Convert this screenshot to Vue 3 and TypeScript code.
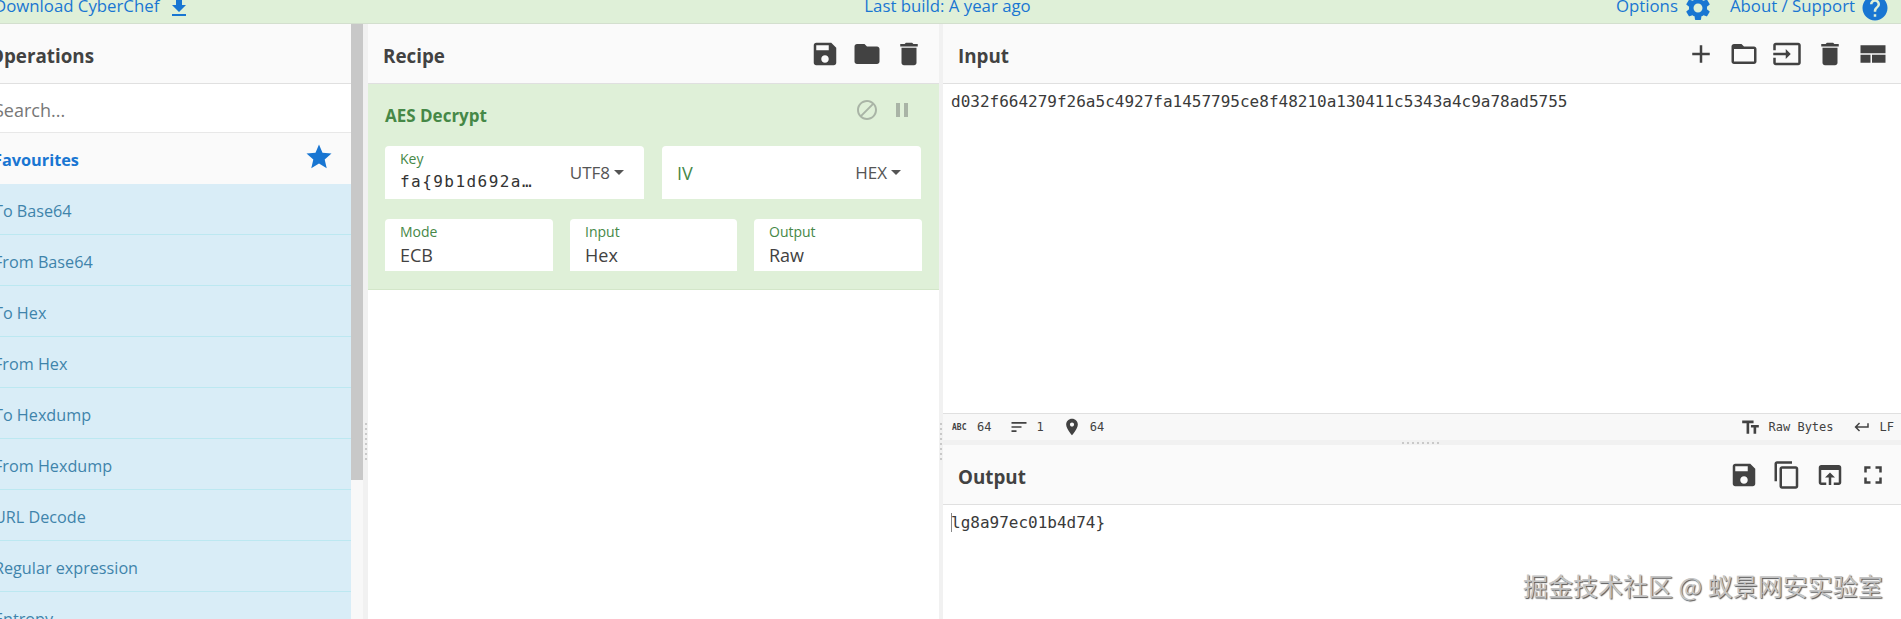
<script setup lang="ts">
const p: Record<string, string> = {
  save: 'M17 3H5c-1.11 0-2 .9-2 2v14c0 1.1.89 2 2 2h14c1.1 0 2-.9 2-2V7l-4-4zm-5 16c-1.66 0-3-1.34-3-3s1.34-3 3-3 3 1.34 3 3-1.34 3-3 3zm3-10H5V5h10v4z',
  folder: 'M10 4H4c-1.1 0-1.99.9-1.99 2L2 18c0 1.1.9 2 2 2h16c1.1 0 2-.9 2-2V8c0-1.1-.9-2-2-2h-8l-2-2z',
  folderOpen: 'M20 6h-8l-2-2H4c-1.1 0-1.99.9-1.99 2L2 18c0 1.1.9 2 2 2h16c1.1 0 2-.9 2-2V8c0-1.1-.9-2-2-2zm0 12H4V8h16v10z',
  del: 'M6 19c0 1.1.9 2 2 2h8c1.1 0 2-.9 2-2V7H6v12zM19 4h-3.5l-1-1h-5l-1 1H5v2h14V4z',
  add: 'M19 13h-6v6h-2v-6H5v-2h6V5h2v6h6v2z',
  input: 'M21 3.01H3c-1.1 0-2 .9-2 2V9h2V4.99h18v14.03H3V15H1v4.01c0 1.1.9 1.98 2 1.98h18c1.1 0 2-.88 2-1.98v-14c0-1.11-.9-2-2-2zM11 16l4-4-4-4v3H1v2h10v3z',
  layout: 'M2 5h20v6.4H2zM2 12.6h8v6.4H2zM11.2 12.6H22v6.4H11.2z',
  copy: 'M16 1H4c-1.1 0-2 .9-2 2v14h2V3h12V1zm3 4H8c-1.1 0-2 .9-2 2v14c0 1.1.9 2 2 2h11c1.1 0 2-.9 2-2V7c0-1.1-.9-2-2-2zm0 16H8V7h11v14z',
  open: 'M19 4H5c-1.11 0-2 .9-2 2v12c0 1.1.89 2 2 2h4v-2H5V8h14v10h-4v2h4c1.1 0 2-.9 2-2V6c0-1.1-.89-2-2-2zm-7 6l-4 4h3v6h2v-6h3l-4-4z',
  full: 'M7 14H5v5h5v-2H7v-3zm-2-4h2V7h3V5H5v5zm12 7h-3v2h5v-5h-2v3zM14 5v2h3v3h2V5h-5z',
  gear: 'M19.14 12.94c.04-.3.06-.61.06-.94 0-.32-.02-.64-.07-.94l2.03-1.58c.18-.14.23-.41.12-.61l-1.92-3.32c-.12-.22-.37-.29-.59-.22l-2.39.96c-.5-.38-1.03-.7-1.62-.94l-.36-2.54c-.04-.24-.24-.41-.48-.41h-3.84c-.24 0-.43.17-.47.41l-.36 2.54c-.59.24-1.13.57-1.62.94l-2.39-.96c-.22-.08-.47 0-.59.22L2.74 8.87c-.12.21-.08.47.12.61l2.03 1.58c-.05.3-.09.63-.09.94s.02.64.07.94l-2.03 1.58c-.18.14-.23.41-.12.61l1.92 3.32c.12.22.37.29.59.22l2.39-.96c.5.38 1.03.7 1.62.94l.36 2.54c.05.24.24.41.48.41h3.84c.24 0 .44-.17.47-.41l.36-2.54c.59-.24 1.13-.56 1.62-.94l2.39.96c.22.08.47 0 .59-.22l1.92-3.32c.12-.22.07-.47-.12-.61l-2.01-1.58zM12 15.6c-1.98 0-3.6-1.62-3.6-3.6s1.62-3.6 3.6-3.6 3.6 1.62 3.6 3.6-1.62 3.6-3.6 3.6z',
  help: 'M12 2C6.48 2 2 6.48 2 12s4.48 10 10 10 10-4.48 10-10S17.52 2 12 2zm1 17h-2v-2h2v2zm2.07-7.75l-.9.92C13.45 12.9 13 13.5 13 15h-2v-.5c0-1.1.45-2.1 1.17-2.83l1.24-1.26c.37-.36.59-.86.59-1.41 0-1.1-.9-2-2-2s-2 .9-2 2H8c0-2.21 1.79-4 4-4s4 1.79 4 4c0 .88-.36 1.68-.93 2.25z',
  star: 'M12 17.27L18.18 21l-1.64-7.03L22 9.24l-7.19-.61L12 2 9.19 8.63 2 9.24l5.46 4.73L5.82 21z',
  download: 'M19 9h-4V3H9v6H5l7 7 7-7zM5 18v2h14v-2H5z',
  block: 'M12 2C6.48 2 2 6.48 2 12s4.48 10 10 10 10-4.48 10-10S17.52 2 12 2zM4 12c0-4.42 3.58-8 8-8 1.85 0 3.55.63 4.9 1.69L5.69 16.9C4.63 15.55 4 13.85 4 12zm8 8c-1.85 0-3.55-.63-4.9-1.69L18.31 7.1C19.37 8.45 20 10.15 20 12c0 4.42-3.58 8-8 8z',
  pause: 'M6 19h4V5H6v14zm8-14v14h4V5h-4z',
  place: 'M12 2C8.13 2 5 5.13 5 9c0 5.25 7 13 7 13s7-7.75 7-13c0-3.87-3.13-7-7-7zm0 9.5c-1.38 0-2.5-1.12-2.5-2.5s1.12-2.5 2.5-2.5 2.5 1.12 2.5 2.5-1.12 2.5-2.5 2.5z',
  sort: 'M3 18h6v-2H3v2zM3 6v2h18V6H3zm0 7h12v-2H3v2z',
  text: 'M2.5 4v3h5v12h3V7h5V4h-13zm19 5h-9v3h3v7h3v-7h3V9z',
  ret: 'M19 7v4H5.83l3.58-3.59L8 6l-6 6 6 6 1.41-1.41L5.83 13H21V7h-2z',
}
const ops = ['To Base64', 'From Base64', 'To Hex', 'From Hex', 'To Hexdump', 'From Hexdump', 'URL Decode', 'Regular expression', 'Entropy']
const recipeIcons = ['save', 'folder', 'del']
const inputIcons = ['add', 'folderOpen', 'input', 'del', 'layout']
const outputIcons = ['save', 'copy', 'open', 'full']
const selects = [
  { label: 'Mode', value: 'ECB' },
  { label: 'Input', value: 'Hex' },
  { label: 'Output', value: 'Raw' },
]
</script>

<template>
  <div class="app">
    <header class="banner">
      <div class="b-left">
        <span class="b-link cut">Download CyberChef</span>
        <svg class="b-dl" viewBox="0 0 24 24"><path :d="p.download" /></svg>
      </div>
      <span class="b-link b-mid">Last build: A year ago</span>
      <div class="b-right">
        <span class="b-link">Options</span>
        <svg class="b-ic" viewBox="0 0 24 24"><path :d="p.gear" /></svg>
        <span class="b-link b-about">About / Support</span>
        <svg class="b-ic" viewBox="0 0 24 24"><path :d="p.help" /></svg>
      </div>
    </header>

    <main class="main">
      <section class="ops">
        <div class="ops-list">
          <div class="head"><h2 class="title cut">Operations</h2></div>
          <div class="search"><span class="cut">Search...</span></div>
          <div class="fav">
            <span class="cut">Favourites</span>
            <svg class="star" viewBox="0 0 24 24"><path :d="p.star" /></svg>
          </div>
          <div v-for="o in ops" :key="o" class="op"><span class="cut">{{ o }}</span></div>
        </div>
        <div class="track"><div class="thumb"></div></div>
      </section>

      <div class="gutter wide"><i class="dots"></i></div>

      <section class="recipe">
        <div class="head">
          <h2 class="title">Recipe</h2>
          <div class="tools">
            <svg v-for="i in recipeIcons" :key="i" class="tool" viewBox="0 0 24 24"><path :d="p[i]" /></svg>
          </div>
        </div>
        <div class="card">
          <div class="card-top">
            <span class="card-title">AES Decrypt</span>
            <div class="card-ctl">
              <svg class="ctl" viewBox="0 0 24 24"><path :d="p.block" /></svg>
              <svg class="ctl" viewBox="0 0 24 24"><path :d="p.pause" /></svg>
            </div>
          </div>
          <div class="row two">
            <div class="field split">
              <div class="stack">
                <label>Key</label>
                <span class="mono-v">fa{9b1d692a…</span>
              </div>
              <span class="enc">UTF8<b class="caret"></b></span>
            </div>
            <div class="field split">
              <span class="iv">IV</span>
              <span class="enc">HEX<b class="caret"></b></span>
            </div>
          </div>
          <div class="row three">
            <div v-for="s in selects" :key="s.label" class="field">
              <div class="stack">
                <label>{{ s.label }}</label>
                <span class="val">{{ s.value }}</span>
              </div>
            </div>
          </div>
        </div>
      </section>

      <div class="gutter"><i class="dots"></i></div>

      <section class="io">
        <div class="head">
          <h2 class="title">Input</h2>
          <div class="tools tight">
            <svg v-for="i in inputIcons" :key="i" class="tool" viewBox="0 0 24 24"><path :d="p[i]" /></svg>
          </div>
        </div>
        <div class="editor in">d032f664279f26a5c4927fa1457795ce8f48210a130411c5343a4c9a78ad5755</div>
        <div class="status">
          <div class="st-group">
            <span class="abc">ABC</span><span class="st-t n1">64</span>
            <svg class="st-i s2" viewBox="0 0 24 24"><path :d="p.sort" /></svg><span class="st-t n2">1</span>
            <svg class="st-i s3" viewBox="0 0 24 24"><path :d="p.place" /></svg><span class="st-t n3">64</span>
          </div>
          <div class="st-group">
            <svg class="st-i tt" viewBox="0 0 24 24"><path :d="p.text" /></svg><span class="st-t n4">Raw Bytes</span>
            <svg class="st-i s5" viewBox="0 0 24 24"><path :d="p.ret" /></svg><span class="st-t n5">LF</span>
          </div>
        </div>
        <div class="hgutter"><i class="hdots"></i></div>
        <div class="head">
          <h2 class="title">Output</h2>
          <div class="tools tight">
            <svg v-for="i in outputIcons" :key="i" class="tool" viewBox="0 0 24 24"><path :d="p[i]" /></svg>
          </div>
        </div>
        <div class="editor out"><i class="cursor"></i>lg8a97ec01b4d74}</div>
      </section>
    </main>

    <div class="mark">掘金技术社区 @ 蚁景网安实验室</div>
  </div>
</template>

<style>
html, body { margin: 0; overflow: hidden; background: #fff; }
</style>

<style scoped>
.app {
  position: relative;
  width: 1901px;
  height: 619px;
  overflow: hidden;
  display: flex;
  flex-direction: column;
  font-family: "Open Sans", "Noto Sans", sans-serif;
  color: #424242;
}
svg { fill: currentColor; display: block; flex: none; }

.banner {
  height: 23px;
  flex: none;
  display: grid;
  grid-template-columns: 1fr auto 1fr;
  align-items: center;
  background: #dff0d8;
  border-bottom: 1px solid #d3dfce;
  font-size: 16.8px;
  color: #1976d2;
}
.b-link { line-height: 20px; margin-top: -11px; white-space: nowrap; }
.b-left { display: flex; align-items: center; }
.b-dl { width: 24px; height: 24px; margin: -8px 0 0 8px; }
.b-mid { text-align: center; padding-right: 6px; }
.b-right { display: flex; align-items: center; justify-content: flex-end; padding-right: 14px; }
.b-ic { width: 30px; height: 30px; margin: -7px -3px 0 5px; }
.b-about { margin-left: 20px; }
.cut { margin-left: -6px; white-space: nowrap; }

.main { flex: 1; min-height: 0; display: flex; }

.ops { width: 363px; flex: none; display: flex; }
.ops-list { width: 351px; flex: none; overflow: hidden; }
.track { width: 12px; background: #f8f8f8; }
.thumb { height: 456px; background: #c8c8c8; }

.gutter { width: 4px; flex: none; background: #f1f1f1; display: flex; flex-direction: column; align-items: center; padding-top: 399px; box-sizing: border-box; }
.gutter.wide { width: 5px; }
.dots { width: 2px; height: 40px; background: repeating-linear-gradient(#c9c9c9 0 2px, transparent 2px 5px); }

.head {
  height: 59px;
  flex: none;
  box-sizing: content-box;
  border-bottom: 1px solid #e0e0e0;
  background: #fafafa;
  display: flex;
  align-items: center;
  justify-content: space-between;
}
.title { margin: 4px 0 0; font-size: 18.8px; font-weight: 700; color: #424242; }
.title.cut { margin-left: -11px; }
.recipe .title, .io .title { padding-left: 15px; }

.search {
  height: 44px;
  display: flex;
  align-items: center;
  border-bottom: 1px solid #e8e8e8;
  font-size: 18px;
  color: #777;
  background: #fff;
  padding-top: 4px;
}
.fav {
  height: 51px;
  display: flex;
  align-items: center;
  justify-content: space-between;
  background: #fafafa;
  color: #1976d2;
  font-weight: 700;
  font-size: 16.3px;
  padding-right: 17px;
}
.fav .cut { margin-top: 2px; margin-left: -7px; }
.star { width: 30px; height: 30px; margin-top: -4px; }
.op {
  height: 50px;
  display: flex;
  align-items: center;
  background: #d9edf7;
  border-bottom: 1px solid #bce8f1;
  color: #3f84ab;
  font-size: 16.2px;
}
.op .cut { margin-top: 4px; margin-left: -6px; }

.recipe { width: 571px; flex: none; display: flex; flex-direction: column; }
.tools { display: flex; gap: 12px; padding-right: 15px; color: #424242; }
.tools.tight { gap: 13px; padding-right: 13px; }
.tool { width: 30px; height: 30px; }

.card { background: #dff0d8; border-bottom: 1px solid #d3e6c9; padding: 0 18px 18px 17px; }
.card-top { height: 62px; display: flex; align-items: center; justify-content: space-between; }
.card-title { font-size: 17px; font-weight: 700; color: #468847; }
.card-ctl { display: flex; gap: 11px; color: #a9b4a6; margin: -10px 7px 0 0; }
.ctl { width: 24px; height: 24px; }
.row { display: grid; }
.two { grid-template-columns: 259px 259px; column-gap: 18px; height: 53px; margin-bottom: 20px; }
.three { grid-template-columns: 168px 167px 168px; column-gap: 17px; height: 52px; }
.field { background: #fff; border-radius: 4px 4px 0 0; padding: 0 0 0 15px; overflow: hidden; }
.split { display: flex; align-items: center; justify-content: space-between; padding-right: 20px; }
.stack { display: flex; flex-direction: column; align-self: flex-start; }
.stack label { font-size: 14px; line-height: 16px; color: #468847; padding-top: 5px; }
.val { font-size: 18px; line-height: 24px; margin-top: 3px; color: #424242; }
.mono-v { font-family: "DejaVu Sans Mono", monospace; font-size: 16px; line-height: 24px; margin-top: 3px; letter-spacing: 1.45px; color: #333; white-space: nowrap; }
.iv { font-size: 18px; color: #468847; }
.enc { display: flex; align-items: center; font-size: 17px; color: #555; }
.caret { width: 0; height: 0; margin-left: 4px; border-left: 5px solid transparent; border-right: 5px solid transparent; border-top: 5px solid #555; }

.io { flex: 1; min-width: 0; display: flex; flex-direction: column; }
.editor { font-family: "DejaVu Sans Mono", monospace; font-size: 16px; line-height: 20px; color: #3a3a3a; padding: 8px 0 0 8px; background: #fff; white-space: nowrap; }
.editor.in { height: 329px; flex: none; box-sizing: border-box; }
.editor.out { flex: 1; padding-top: 8px; position: relative; }
.cursor { display: inline-block; width: 1px; height: 19px; background: #888; margin: 0 -1px -4px 0; }

.status {
  height: 26px;
  flex: none;
  border-top: 1px solid #e0e0e0;
  background: #f8f8f8;
  display: flex;
  align-items: center;
  justify-content: space-between;
  padding: 0 7px 0 9px;
  font-family: "DejaVu Sans Mono", monospace;
  font-size: 12px;
  color: #424242;
}
.st-group { display: flex; align-items: center; }
.abc { font-weight: 700; font-size: 8px; width: 16px; letter-spacing: 0; }
.st-i { width: 18px; height: 18px; }
.st-i.s2, .st-i.s3 { width: 20px; height: 20px; }
.st-i.tt { width: 21px; height: 21px; }
.st-t { white-space: nowrap; }
.n1 { margin-left: 9px; }
.s2 { margin-left: 18px; }
.n2 { margin-left: 7px; }
.s3 { margin-left: 18px; }
.n3 { margin-left: 8px; }
.n4 { margin-left: 8px; }
.s5 { margin-left: 19px; }
.n5 { margin-left: 9px; }

.hgutter { height: 5px; flex: none; background: #f1f1f1; display: flex; justify-content: center; align-items: center; }
.hdots { width: 40px; height: 2px; background: repeating-linear-gradient(90deg, #c9c9c9 0 2px, transparent 2px 5px); }

.mark {
  position: absolute;
  left: 1523px;
  top: 568px;
  font-family: "Noto Sans CJK SC", sans-serif;
  font-size: 25px;
  line-height: 34px;
  white-space: nowrap;
  color: #c4c4c4;
  text-shadow: 1px 1px 1px #555;
}
</style>
